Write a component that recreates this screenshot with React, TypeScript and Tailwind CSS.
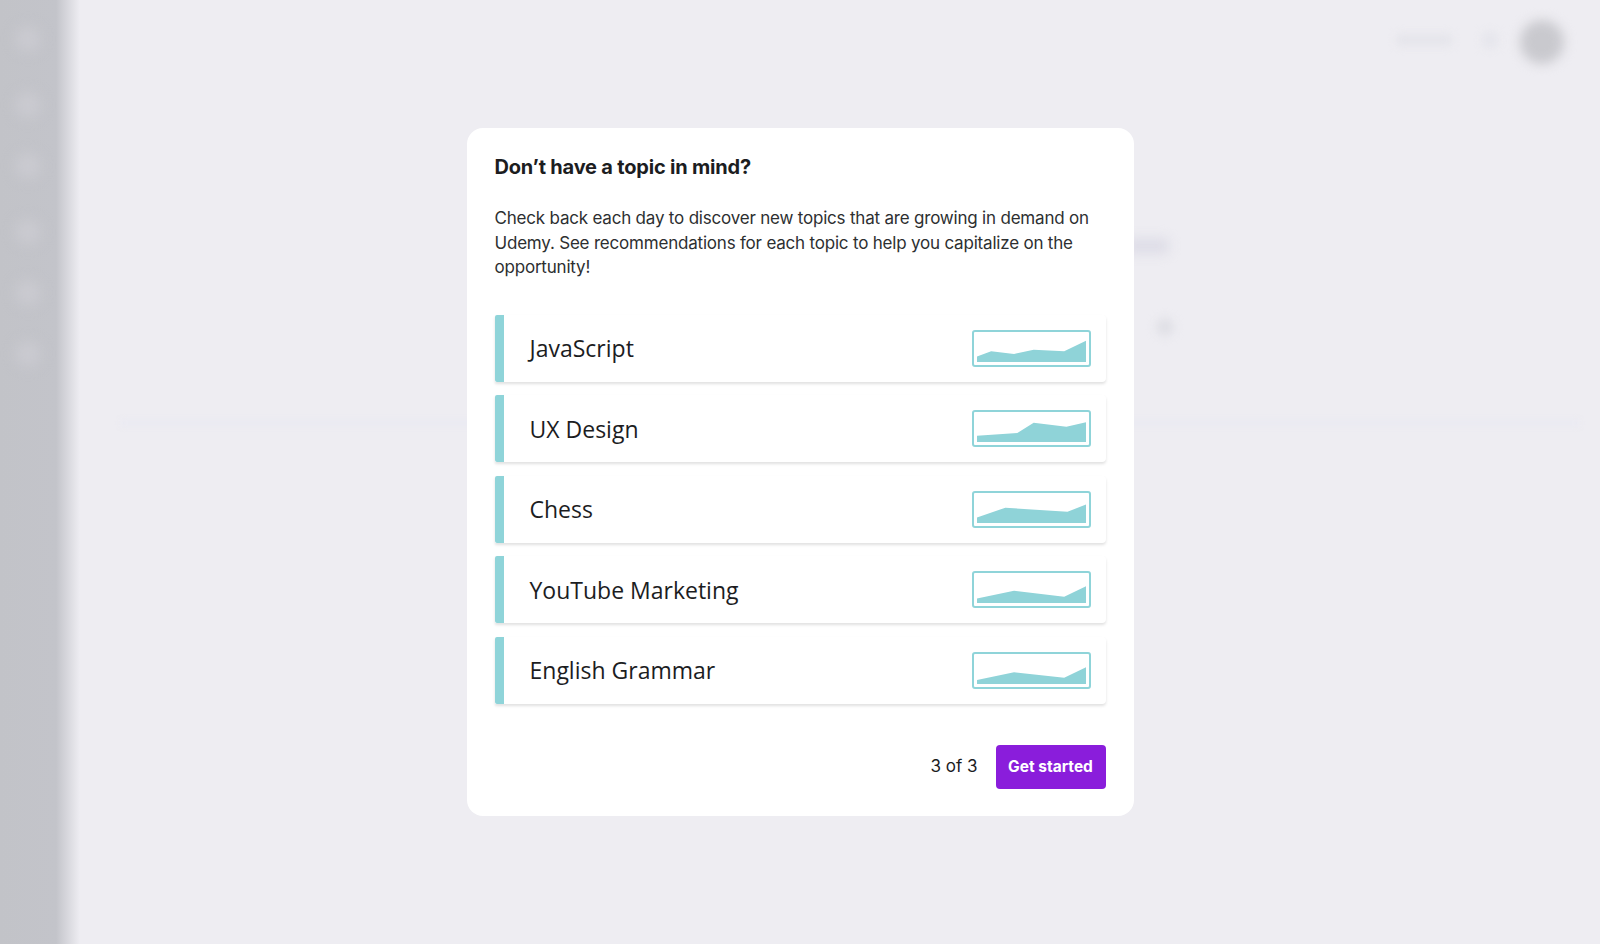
import React from "react";

type Topic = { name: string; points: string };

// chart points in a 100x30 box, y measured from the top
const topics: Topic[] = [
  { name: "JavaScript", points: "0,24 13,18 34,21 52,16.5 80,18 100,6.5" },
  { name: "UX Design", points: "0,23 37,20 52,8.5 82,13 100,8" },
  { name: "Chess", points: "0,24 26,13 83,17.5 100,9.5" },
  { name: "YouTube Marketing", points: "0,25 34,16.5 80,23 100,11.5" },
  { name: "English Grammar", points: "0,25.5 34,17 80,23 100,11.5" },
];

function Sparkline({ points }: { points: string }) {
  return (
    <div className="h-[37px] w-[119px] shrink-0 rounded-[3px] border-[2.5px] border-[#8fd4d9] bg-white p-[3px]">
      <svg viewBox="0 0 100 30" preserveAspectRatio="none" className="block h-full w-full">
        <polygon points={`${points} 100,30 0,30`} fill="#8fd3d8" />
      </svg>
    </div>
  );
}

function TopicRow({ topic }: { topic: Topic }) {
  return (
    <div className="flex h-[67px] items-center rounded-r-[4px] bg-white shadow-[0_2px_3px_rgba(0,0,0,0.12)]">
      <div className="h-full w-[9px] shrink-0 rounded-l-[2px] bg-[#8fd4d9]" />
      <div className="flex-1 pl-[26px] font-['Open_Sans',sans-serif] text-[23px] text-[#1c1d1f]">
        {topic.name}
      </div>
      <div className="pr-[15px]">
        <Sparkline points={topic.points} />
      </div>
    </div>
  );
}

function BackgroundPage() {
  const navIcons = [39, 105, 166, 232, 293, 354];
  return (
    <div className="flex h-[944px] w-full overflow-hidden bg-[#eeedf2]">
      <div className="relative w-[80px] shrink-0 bg-gradient-to-r from-[#c2c3c8] via-[#c3c4ca] via-70% to-[#eeedf2]">
        {navIcons.map((top) => (
          <div
            key={top}
            className="absolute left-[16px] h-[24px] w-[24px] rounded-full bg-[#cbcbd1] blur-[7px]"
            style={{ top: top - 12 }}
          />
        ))}
      </div>
      <div className="relative flex-1">
        <div className="flex justify-end pr-[36px] pt-[20px]">
          <div className="mt-[14px] h-[12px] w-[56px] rounded bg-[#e5e5eb] blur-[4px]" />
          <div className="ml-[30px] mt-[12px] h-[16px] w-[16px] rounded bg-[#e6e6ec] blur-[4px]" />
          <div className="ml-[22px] h-[44px] w-[44px] rounded-full bg-[#c9c9ce] blur-[6px]" />
        </div>
        <div className="absolute left-[1045px] top-[238px] h-[16px] w-[44px] rounded bg-[#dedde7] blur-[6px]" />
        <div className="absolute left-[1076px] top-[318px] h-[18px] w-[18px] rounded-full bg-[#dfdfe5] blur-[5px]" />
        <div className="absolute left-[40px] right-[20px] top-[420px] h-[6px] bg-[#eaeaf3] blur-[3px]" />
      </div>
    </div>
  );
}

export default function App() {
  return (
    <div className="relative h-[944px] w-full overflow-hidden font-['Inter',sans-serif]">
      <BackgroundPage />
      <div className="absolute inset-0 flex items-center justify-center">
        <div className="w-[667px] rounded-[16px] bg-white px-[28px] pb-[27px] pt-[26px]">
          <h2 className="text-[20px] font-bold leading-[26px] tracking-[-0.2px] text-[#1c1d1f]">
            Don’t have a topic in mind?
          </h2>
          <p className="mt-[26px] text-[17px] leading-[24.5px] tracking-[-0.2px] text-[#2d2f31]">
            Check back each day to discover new topics that are growing in demand on Udemy. See
            recommendations for each topic to help you capitalize on the opportunity!
          </p>
          <div className="mt-[35px] flex flex-col gap-[13.5px]">
            {topics.map((t) => (
              <TopicRow key={t.name} topic={t} />
            ))}
          </div>
          <div className="mt-[41px] flex items-center justify-end gap-[18px]">
            <span className="text-[17px] text-[#1c1d1f]">3 of 3</span>
            <button className="h-[44px] w-[110px] rounded-[4px] bg-[#8a1ddb] text-[15.5px] font-bold text-white">
              Get started
            </button>
          </div>
        </div>
      </div>
    </div>
  );
}
